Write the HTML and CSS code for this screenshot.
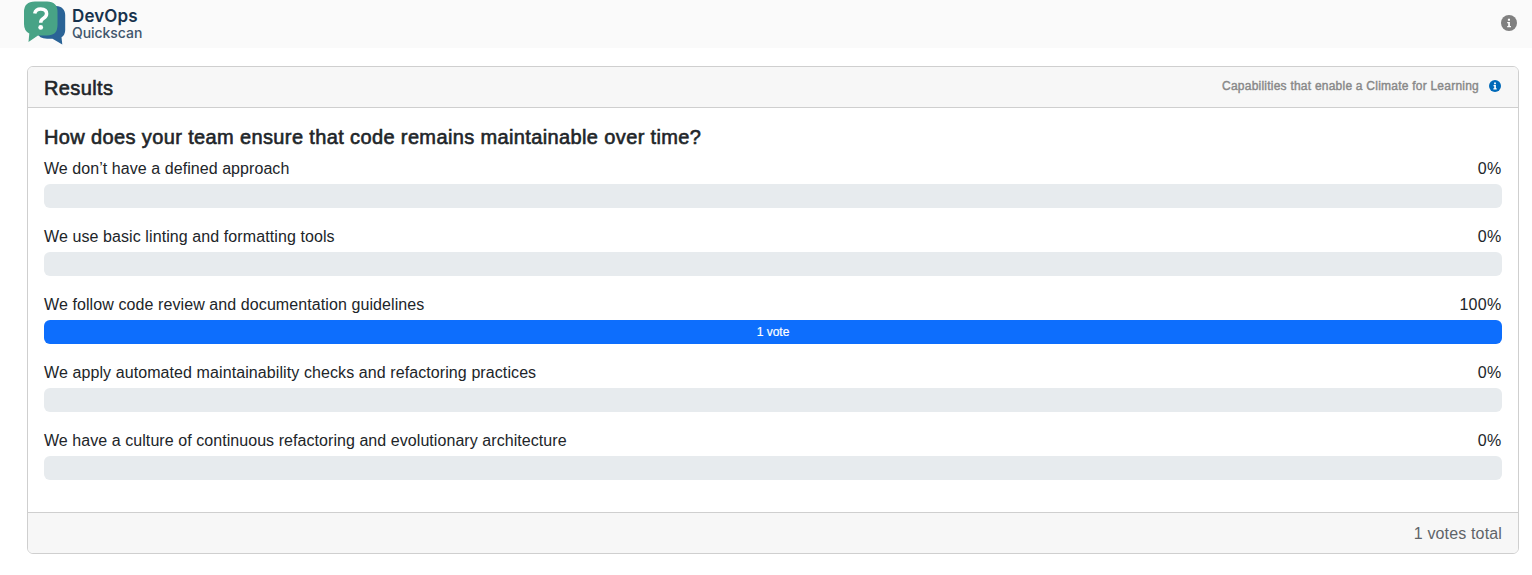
FILE: index.html
```html
<!DOCTYPE html>
<html lang="en">
<head>
<meta charset="utf-8">
<title>DevOps Quickscan</title>
<link rel="stylesheet" href="styles.css">
</head>
<body>
<header class="navbar">
  <div class="brand">
    <svg class="brand-mark" width="44" height="46" viewBox="0 0 44 46">
      <path d="M33 6C39 6 42.200 10 42.200 15V30Q42.200 35 38.500 37.200L39.300 44.500L29.500 38.700H24Q16 38.700 14 33V6Z" fill="#2a6396"/>
      <path d="M12 1.500H24Q34.500 1.500 34.500 12V25Q34.500 35.500 24 35.500H15L5.500 42L6.300 33.500Q1 31 1 24V12Q1 1.500 12 1.500Z" fill="#48a386"/>
      <path d="M11.700 13.500Q12.700 8.900 17.700 8.900Q23.600 8.900 23.600 13.700Q23.600 16.400 20.600 18.200Q17.700 19.900 17.700 22.700" fill="none" stroke="#fff" stroke-width="3.500"/>
      <circle cx="17.700" cy="27.400" r="2.400" fill="#fff"/>
    </svg>
    <div class="brand-text">
      <span class="brand-name">DevOps</span>
      <span class="brand-sub">Quickscan</span>
    </div>
  </div>
  <svg class="about" width="16" height="16" viewBox="0 0 16 16">
    <circle cx="8" cy="8" r="8" fill="#808080"/>
    <path d="M6.200 7H8.900V11H10V12.200H6.200V11H7.200V8.200H6.200ZM6.900 3.700H9V5.700H6.900Z" fill="#fff"/>
  </svg>
</header>
<main class="card">
  <div class="card-header">
    <h1 class="title results">Results</h1>
    <div class="capability">
      <span class="capability-name">Capabilities that enable a Climate for Learning</span>
      <svg width="12" height="12" viewBox="0 0 16 16">
        <circle cx="8" cy="8" r="8" fill="#0069b8"/>
        <path d="M6 6.700H9.200V11H10.300V12.500H5.800V11H7V8.200H6ZM6.800 3.200H9.200V5.600H6.800Z" fill="#fff"/>
      </svg>
    </div>
  </div>
  <div class="card-body">
    <h2 class="title question">How does your team ensure that code remains maintainable over time?</h2>
    <div class="answer">
      <div class="answer-label"><span class="snug">We don’t have a defined approach</span><span class="percent">0%</span></div>
      <div class="progress"></div>
    </div>
    <div class="answer">
      <div class="answer-label"><span>We use basic linting and formatting tools</span><span class="percent">0%</span></div>
      <div class="progress"></div>
    </div>
    <div class="answer">
      <div class="answer-label"><span>We follow code review and documentation guidelines</span><span class="percent">100%</span></div>
      <div class="progress"><div class="progress-bar" style="width:100%">1 vote</div></div>
    </div>
    <div class="answer">
      <div class="answer-label"><span>We apply automated maintainability checks and refactoring practices</span><span class="percent">0%</span></div>
      <div class="progress"></div>
    </div>
    <div class="answer">
      <div class="answer-label"><span class="snug">We have a culture of continuous refactoring and evolutionary architecture</span><span class="percent">0%</span></div>
      <div class="progress"></div>
    </div>
  </div>
  <div class="card-footer">1 votes total</div>
</main>
</body>
</html>
```
FILE: styles.css
```css
* { box-sizing: border-box; }
body {
  margin: 0;
  background: #fff;
  color: #212529;
  font: 16px/24px "Liberation Sans", Arial, sans-serif;
}
.navbar {
  height: 48px;
  padding: 0 15px 0 23px;
  background: #fafafa;
  display: flex;
  justify-content: space-between;
}
.brand { display: flex; gap: 5px; }
.brand-mark { display: block; }
.brand-text {
  display: flex;
  flex-direction: column;
  padding-top: 8px;
  font-family: Inter, sans-serif;
}
.brand-name {
  font-size: 17px;
  line-height: 16px;
  font-weight: 600;
  letter-spacing: 0.1px;
  color: #17324d;
}
.brand-sub {
  font-size: 14px;
  line-height: 17px;
  font-weight: 500;
  letter-spacing: -0.05px;
  color: #40566c;
}
.about { margin-top: 15px; }
.card {
  margin: 18px 13px 0 27px;
  border: 1px solid #cfcfcf;
  border-radius: 6px;
  overflow: hidden;
}
.card-header {
  height: 41px;
  padding: 8px 17px 8px 16px;
  display: flex;
  justify-content: space-between;
  background: #f7f7f7;
  border-bottom: 1px solid #cfcfcf;
}
.title {
  margin: 0;
  font-size: 20px;
  font-weight: 400;
  line-height: 26px;
  letter-spacing: 0.37px;
  -webkit-text-stroke: 0.6px #212529;
}
.capability { display: flex; align-items: center; gap: 10px; height: 22px; }
.capability-name {
  color: #888;
  font-size: 12px;
  letter-spacing: 0.23px;
  -webkit-text-stroke: 0.4px #888;
}
.card-body { padding: 16px; }
.question { height: 24px; margin-bottom: 8px; }
.answer { margin-bottom: 16px; }
.answer-label {
  display: flex;
  justify-content: space-between;
  height: 28px;
  padding-top: 1px;
  letter-spacing: 0.09px;
}
.snug { letter-spacing: 0.06px; }
.percent { letter-spacing: 0.3px; padding-right: 0.5px; }
.progress {
  height: 24px;
  border-radius: 6px;
  background: #e7ebee;
  overflow: hidden;
}
.progress-bar {
  height: 24px;
  background: #0d6efd;
  color: #fff;
  font-size: 12px;
  text-align: center;
  -webkit-text-stroke: 0.2px #fff;
}
.card-footer {
  height: 41px;
  padding: 9px 16px 7px;
  background: #f7f7f7;
  border-top: 1px solid #cfcfcf;
  color: #606468;
  text-align: right;
  letter-spacing: 0.15px;
}
```
